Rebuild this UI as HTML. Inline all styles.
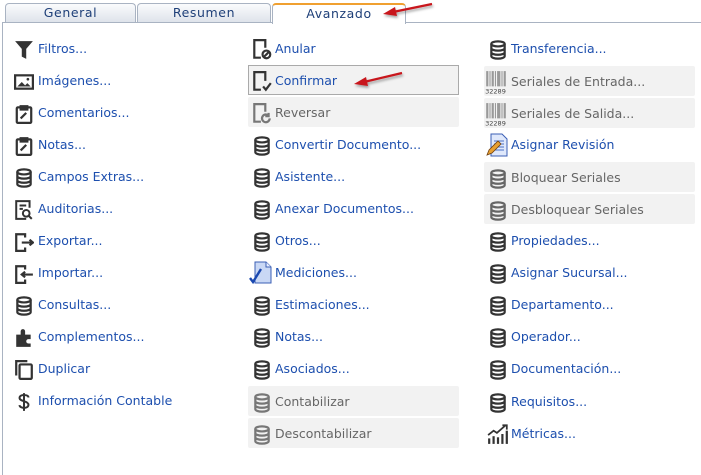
<!DOCTYPE html>
<html><head><meta charset="utf-8"><style>
*{margin:0;padding:0;box-sizing:border-box}
body{width:701px;height:475px;background:#fff;position:relative;overflow:hidden;font-family:"DejaVu Sans","Liberation Sans",sans-serif;font-size:12.5px}
.tab{position:absolute;top:3px;height:20px;border:1px solid #a9b3c2;border-bottom:none;border-radius:4px 4px 0 0;background:linear-gradient(#fafbfd,#dde2ea);text-align:center;line-height:18px;color:#1e3f78;letter-spacing:.6px;font-size:12.5px}
.tab.act{background:#fff;border-top:2px solid #f0a030;height:21px;line-height:17px;color:#1e3f78}
.line{position:absolute;top:22px;left:2px;right:0;height:1px;background:#a9b3c2}
.vl{position:absolute;left:2px;top:22px;width:1px;height:453px;background:#a9b3c2}
.it{position:absolute;height:30px;width:211px;line-height:30px;color:#1d4fae;white-space:nowrap}
.it.d{background:#f2f2f2;color:#666;border-radius:2px}
.it.sel{background:#f2f2f2;border:1px solid #aaa;color:#1d4fae}
.it svg{position:absolute;left:4px;top:6px;margin-top:1px}
.it span{position:absolute;left:27px;top:1px}
.c1 span{left:24px}
</style></head><body>
<div class="tab" style="left:5px;width:131px">General</div>
<div class="tab" style="left:137px;width:134px">Resumen</div>
<div class="line"></div>
<div class="vl"></div>
<div class="tab act" style="left:272px;width:134px">Avanzado</div>

<svg width="0" height="0" style="position:absolute"><defs>
<symbol id="db" viewBox="0 0 18 18"><g fill="none" stroke="currentColor" stroke-width="2"><ellipse cx="9" cy="3.5" rx="6" ry="2.3"/><path d="M3 3.5v11c0 1.3 2.7 2.3 6 2.3s6-1 6-2.3v-11M3 7.3c0 1.3 2.7 2.3 6 2.3s6-1 6-2.3M3 11c0 1.3 2.7 2.3 6 2.3s6-1 6-2.3"/></g></symbol>
<symbol id="clip" viewBox="0 0 18 18"><g fill="none" stroke="#333" stroke-width="2"><rect x="2.5" y="3" width="13" height="14" rx="1"/><path d="M6 2h6v3H6z" fill="#333"/><path d="M6 13l5-5"/></g></symbol>
<symbol id="bar" viewBox="0 0 20 22"><g fill="#999"><rect x="1" y="1" width="2" height="14"/><rect x="4" y="1" width="1" height="14"/><rect x="6" y="1" width="2" height="14"/><rect x="9" y="1" width="1" height="14"/><rect x="11" y="1" width="3" height="14"/><rect x="15" y="1" width="1" height="14"/><rect x="17" y="1" width="2" height="14"/></g><text x="0" y="21.5" font-size="6" fill="#444" font-family="DejaVu Sans">32289</text></symbol>
</defs></svg>

<!-- column 1 -->
<div class="it c1" style="left:10px;top:33px"><svg width="20" height="20" viewBox="0 0 18 18"><path d="M1 1h16l-6 7v9l-4-2V8z" fill="#333"/></svg><span style="left:28px">Filtros...</span></div>
<div class="it c1" style="left:10px;top:65px"><svg width="20" height="20" viewBox="0 0 18 18"><rect x="1" y="3" width="16" height="12" fill="none" stroke="#333" stroke-width="2"/><path d="M3 13l4-4 3 3 2-2 3 3z" fill="#333"/><circle cx="12.5" cy="6.5" r="1.2" fill="#333"/></svg><span style="left:28px">Imágenes...</span></div>
<div class="it c1" style="left:10px;top:97px"><svg width="20" height="20" style="color:#333"><use href="#clip"/></svg><span style="left:28px">Comentarios...</span></div>
<div class="it c1" style="left:10px;top:129px"><svg width="20" height="20"><use href="#clip"/></svg><span style="left:28px">Notas...</span></div>
<div class="it c1" style="left:10px;top:161px"><svg width="20" height="20" style="color:#333"><use href="#db"/></svg><span style="left:28px">Campos Extras...</span></div>
<div class="it c1" style="left:10px;top:193px"><svg width="20" height="20" viewBox="0 0 18 18"><g fill="none" stroke="#333" stroke-width="1.8"><path d="M11 17H2V1h12v6"/><path d="M5 5h6M5 8h3"/><circle cx="11" cy="12" r="3"/><path d="M13 14l3 3"/></g></svg><span style="left:28px">Auditorias...</span></div>
<div class="it c1" style="left:10px;top:225px"><svg width="20" height="20" viewBox="0 0 18 18"><g fill="none" stroke="#333" stroke-width="2"><path d="M10 5V2H2v15h8v-3"/><path d="M7 9.5h10M14 7l3 2.5-3 2.5"/></g></svg><span style="left:28px">Exportar...</span></div>
<div class="it c1" style="left:10px;top:257px"><svg width="20" height="20" viewBox="0 0 18 18"><g fill="none" stroke="#333" stroke-width="2"><path d="M10 5V2H2v15h8v-3"/><path d="M17 9.5H7M10 7L7 9.5 10 12"/></g></svg><span style="left:28px">Importar...</span></div>
<div class="it c1" style="left:10px;top:289px"><svg width="20" height="20" style="color:#333"><use href="#db"/></svg><span style="left:28px">Consultas...</span></div>
<div class="it c1" style="left:10px;top:321px"><svg width="20" height="20" viewBox="0 0 18 18"><path d="M2 6h4V3a2 2 0 014 0v3h5v4h-2a2 2 0 000 4h2v3H2z" fill="#333"/></svg><span style="left:28px">Complementos...</span></div>
<div class="it c1" style="left:10px;top:353px"><svg width="20" height="20" viewBox="0 0 18 18"><g fill="none" stroke="#333" stroke-width="2"><path d="M2 14V1h10"/><rect x="5" y="4" width="11" height="13" rx="1"/></g></svg><span style="left:28px">Duplicar</span></div>
<div class="it c1" style="left:10px;top:385px"><svg width="20" height="20" viewBox="0 0 18 18"><g fill="none" stroke="#333" stroke-width="1.8"><path d="M9 1v16M13 5c0-1.5-1.8-2.3-4-2.3S5 3.5 5 5.3s2 2.4 4 3 4 1.3 4 3.2-2 2.8-4 2.8-4-.9-4-2.5"/></g></svg><span style="left:28px">Información Contable</span></div>

<!-- column 2 -->
<div class="it" style="left:248px;top:33px"><svg width="20" height="22" viewBox="0 0 18 20" style="top:5px"><g fill="none" stroke="#333" stroke-width="2"><path d="M8 17H2V1h10v7"/><circle cx="13" cy="14" r="3.5"/><path d="M11 16l4-4"/></g></svg><span>Anular</span></div>
<div class="it sel" style="left:248px;top:65px"><svg width="20" height="22" viewBox="0 0 18 20" style="top:4px;left:3px"><g fill="none" stroke="#333" stroke-width="2"><path d="M8 17H2V1h10v8"/><path d="M10 14l2.5 3 4.5-6"/></g></svg><span style="left:26px;top:0px">Confirmar</span></div>
<div class="it d" style="left:248px;top:97px"><svg width="20" height="22" viewBox="0 0 18 20" style="top:5px"><g fill="none" stroke="#777" stroke-width="2"><path d="M8 17H2V1h10v7"/><path d="M16 14a3.5 3.5 0 11-1-2.5M15 9v3h-3"/></g></svg><span>Reversar</span></div>
<div class="it" style="left:248px;top:129px"><svg width="20" height="20" style="color:#333"><use href="#db"/></svg><span>Convertir Documento...</span></div>
<div class="it" style="left:248px;top:161px"><svg width="20" height="20" style="color:#333"><use href="#db"/></svg><span>Asistente...</span></div>
<div class="it" style="left:248px;top:193px"><svg width="20" height="20" style="color:#333"><use href="#db"/></svg><span>Anexar Documentos...</span></div>
<div class="it" style="left:248px;top:225px"><svg width="20" height="20" style="color:#333"><use href="#db"/></svg><span>Otros...</span></div>
<div class="it" style="left:248px;top:257px"><svg width="24" height="24" viewBox="0 0 24 24" style="left:1px;top:3px"><path d="M6 1h11l5 5v16H6z" fill="#c9d8f5" stroke="#3b5fb5"/><path d="M17 1v5h5" fill="#e8efff" stroke="#3b5fb5"/><path d="M1 17l3 4 8-13" fill="none" stroke="#1a48b0" stroke-width="2.4"/></svg><span>Mediciones...</span></div>
<div class="it" style="left:248px;top:289px"><svg width="20" height="20" style="color:#333"><use href="#db"/></svg><span>Estimaciones...</span></div>
<div class="it" style="left:248px;top:321px"><svg width="20" height="20" style="color:#333"><use href="#db"/></svg><span>Notas...</span></div>
<div class="it" style="left:248px;top:353px"><svg width="20" height="20" style="color:#333"><use href="#db"/></svg><span>Asociados...</span></div>
<div class="it d" style="left:248px;top:386px"><svg width="20" height="20" style="color:#777"><use href="#db"/></svg><span>Contabilizar</span></div>
<div class="it d" style="left:248px;top:418px"><svg width="20" height="20" style="color:#777"><use href="#db"/></svg><span>Descontabilizar</span></div>

<!-- column 3 -->
<div class="it" style="left:484px;top:33px"><svg width="20" height="20" style="color:#333"><use href="#db"/></svg><span>Transferencia...</span></div>
<div class="it d" style="left:484px;top:66px"><svg width="22" height="24" viewBox="0 0 20 22" style="left:1px;top:3px"><use href="#bar"/></svg><span>Seriales de Entrada...</span></div>
<div class="it d" style="left:484px;top:98px"><svg width="22" height="24" viewBox="0 0 20 22" style="left:1px;top:3px"><use href="#bar"/></svg><span>Seriales de Salida...</span></div>
<div class="it" style="left:484px;top:129px"><svg width="24" height="24" viewBox="0 0 24 24" style="left:1px;top:3px"><path d="M6 1h11l5 5v17H6z" fill="#dfe8fb" stroke="#3b5fb5"/><path d="M9 8h10M9 11h10M9 14h10M9 17h10" stroke="#4a6fc5"/><path d="M2 22l2-5 9-9 3 3-9 9z" fill="#e8a030" stroke="#704010" stroke-width=".8"/></svg><span>Asignar Revisión</span></div>
<div class="it d" style="left:484px;top:162px"><svg width="20" height="20" style="color:#666"><use href="#db"/></svg><span>Bloquear Seriales</span></div>
<div class="it d" style="left:484px;top:194px"><svg width="20" height="20" style="color:#666"><use href="#db"/></svg><span>Desbloquear Seriales</span></div>
<div class="it" style="left:484px;top:225px"><svg width="20" height="20" style="color:#333"><use href="#db"/></svg><span>Propiedades...</span></div>
<div class="it" style="left:484px;top:257px"><svg width="20" height="20" style="color:#333"><use href="#db"/></svg><span>Asignar Sucursal...</span></div>
<div class="it" style="left:484px;top:289px"><svg width="20" height="20" style="color:#333"><use href="#db"/></svg><span>Departamento...</span></div>
<div class="it" style="left:484px;top:321px"><svg width="20" height="20" style="color:#333"><use href="#db"/></svg><span>Operador...</span></div>
<div class="it" style="left:484px;top:353px"><svg width="20" height="20" style="color:#333"><use href="#db"/></svg><span>Documentación...</span></div>
<div class="it" style="left:484px;top:386px"><svg width="20" height="20" style="color:#333"><use href="#db"/></svg><span>Requisitos...</span></div>
<div class="it" style="left:484px;top:418px"><svg width="22" height="22" viewBox="0 0 20 20" style="left:3px;top:4px"><g fill="#333"><rect x="1" y="14" width="2" height="5"/><rect x="5" y="12" width="2" height="7"/><rect x="9" y="13" width="2" height="6"/><rect x="13" y="10" width="2" height="9"/><rect x="17" y="7" width="2" height="12"/></g><path d="M1 11l5-4 3 2 8-7M14 2h4v4" fill="none" stroke="#333" stroke-width="1.6"/></svg><span>Métricas...</span></div>

<!-- red arrows -->
<svg style="position:absolute;left:0;top:0" width="701" height="475">
<defs><filter id="sh"><feDropShadow dx="1" dy="2" stdDeviation="1.2" flood-color="#000" flood-opacity=".35"/></filter></defs>
<g filter="url(#sh)" fill="#c8161b" stroke="#c8161b">
<path d="M432 4L393 12" stroke-width="2.2" fill="none"/><path d="M383 14l12-7 2 9z" stroke="none"/>
<path d="M402 73L364 82" stroke-width="2.2" fill="none"/><path d="M354 84l12-7 2 9z" stroke="none"/>
</g></svg>
</body></html>
